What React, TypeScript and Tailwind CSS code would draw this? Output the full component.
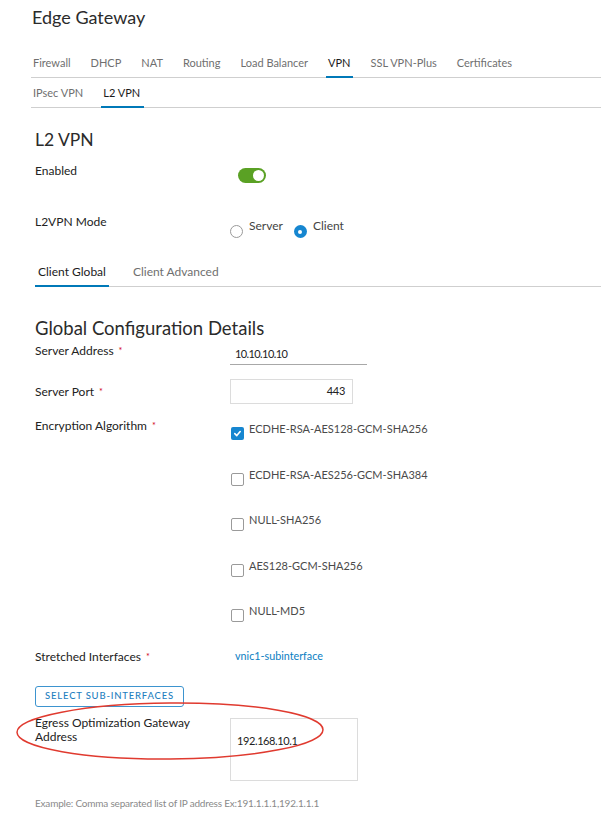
import React from "react";

const font = { fontFamily: "Lato, 'Open Sans', Arial, sans-serif" };

function Tab({
  label,
  active,
  px = "px-[2px]",
  size = "text-[11px]",
}: {
  label: string;
  active?: boolean;
  px?: string;
  size?: string;
}) {
  return (
    <div
      className={`${px} ${size} pb-[5px] -mb-px border-b-2 leading-[16px] ${
        active ? "border-[#0079b8] text-[#1b1b1b]" : "border-transparent text-[#6f6f6f]"
      }`}
    >
      {label}
    </div>
  );
}

function Star() {
  return <span className="ml-[5px] text-[#d0021b] text-[9px] align-top">*</span>;
}

function Checkbox({ checked }: { checked?: boolean }) {
  return checked ? (
    <div className="w-[13px] h-[13px] rounded-[2px] bg-[#1686d0] flex items-center justify-center shrink-0">
      <svg width="9" height="9" viewBox="0 0 10 10">
        <path d="M2 5.2 L4.2 7.3 L8 2.8" fill="none" stroke="white" strokeWidth="1.8" strokeLinecap="round" strokeLinejoin="round" />
      </svg>
    </div>
  ) : (
    <div className="w-[13px] h-[13px] rounded-[2px] border border-[#9a9a9a] bg-white shrink-0" />
  );
}

const labelCls = "w-[195px] text-[12px] leading-[14px] text-[#222]";

export default function App() {
  const options = [
    { label: "ECDHE-RSA-AES128-GCM-SHA256", checked: true },
    { label: "ECDHE-RSA-AES256-GCM-SHA384" },
    { label: "NULL-SHA256" },
    { label: "AES128-GCM-SHA256" },
    { label: "NULL-MD5" },
  ];
  return (
    <div className="relative w-[601px] h-[814px] bg-white overflow-hidden text-[#333]" style={font}>
      <div className="pl-[35px] pt-[5px]">
        <h1 className="text-[18px] leading-[24px] text-[#2b2b2b] -ml-[3px]">Edge Gateway</h1>

        <div className="mt-[26px] -ml-[4px] flex gap-[16px] border-b border-[#cfcfcf]">
          <Tab label="Firewall" />
          <Tab label="DHCP" />
          <Tab label="NAT" />
          <Tab label="Routing" />
          <Tab label="Load Balancer" />
          <Tab label="VPN" active />
          <Tab label="SSL VPN-Plus" />
          <Tab label="Certificates" />
        </div>

        <div className="mt-[7px] -ml-[4px] flex gap-[16px] border-b border-[#cfcfcf]">
          <Tab label="IPsec VPN" />
          <Tab label="L2 VPN" active px="pl-[2px] pr-[4px]" />
        </div>

        <h2 className="mt-[22px] text-[17.5px] leading-[20px] text-[#2b2b2b]">L2 VPN</h2>

        <div className="mt-[14px] h-[51px] flex">
          <div className={labelCls}>Enabled</div>
          <div className="ml-[8px] mt-[4px] w-[28px] h-[15px] rounded-full bg-[#5aa124] flex items-center justify-end pr-[2px]">
            <div className="w-[11px] h-[11px] rounded-full bg-white" />
          </div>
        </div>

        <div className="h-[49px] flex">
          <div className={labelCls}>L2VPN Mode</div>
          <div className="pt-[4px] flex text-[12px] leading-[14px] text-[#444]">
            <div className="flex items-start">
              <div className="mt-[6px] w-[13px] h-[13px] rounded-full border border-[#9a9a9a] bg-white" />
              <span className="ml-[6px]">Server</span>
            </div>
            <div className="flex items-start ml-[11px]">
              <div className="mt-[6px] w-[13px] h-[13px] rounded-full bg-[#1686d0] flex items-center justify-center">
                <div className="w-[4px] h-[4px] rounded-full bg-white" />
              </div>
              <span className="ml-[6px]">Client</span>
            </div>
          </div>
        </div>

        <div className="flex gap-[21px] border-b border-[#cfcfcf]">
          <Tab label="Client Global" active px="px-[3px]" size="text-[12px]" />
          <Tab label="Client Advanced" px="px-[3px]" size="text-[12px]" />
        </div>

        <h2 className="mt-[30px] text-[18.5px] leading-[22px] text-[#2b2b2b]">Global Configuration Details</h2>

        <div className="mt-[5px] h-[35px] flex">
          <div className={labelCls}>
            Server Address<Star />
          </div>
          <div className="mt-[3px] w-[137px] h-[18px] border-b border-[#a8a8a8] pl-[5px] text-[11px] tracking-[-0.6px] leading-[14px] text-[#222]">
            10.10.10.10
          </div>
        </div>

        <div className="h-[40px] flex">
          <div className={`${labelCls} pt-[6px]`}>
            Server Port<Star />
          </div>
          <div className="w-[123px] h-[25px] border border-[#dcdcdc] flex items-center justify-end pr-[7px] text-[11px] tracking-[-0.3px] text-[#222]">
            443
          </div>
        </div>

        <div className="flex">
          <div className={labelCls}>
            Encryption Algorithm<Star />
          </div>
          <div className="pt-[3px] flex flex-col">
            {options.map((o) => (
              <div key={o.label} className="h-[45.5px] flex items-start">
                <div className="mt-[5px] ml-[1px]">
                  <Checkbox checked={o.checked} />
                </div>
                <span className="ml-[5px] text-[11px] leading-[14px] text-[#4a4a4a]">{o.label}</span>
              </div>
            ))}
          </div>
        </div>

        <div className="h-[36px] flex">
          <div className={labelCls}>
            Stretched Interfaces<Star />
          </div>
          <div className="-mt-[1px] pl-[5px] text-[10.75px] leading-[14px] text-[#0a7ec2]">vnic1-subinterface</div>
        </div>

        <button className="w-[149px] h-[21px] border border-[#3d94cf] rounded-[3px] text-[9.5px] tracking-[0.8px] text-[#1f7fc0] font-medium flex items-center justify-center">
          SELECT SUB-INTERFACES
        </button>

        <div className="mt-[9px] flex">
          <div className={labelCls}>
            Egress Optimization Gateway
            <br />
            Address
          </div>
          <div className="mt-[2px] w-[128px] h-[63px] border border-[#dcdcdc] pt-[15px] pl-[6px] text-[11px] tracking-[-0.4px] leading-[14px] text-[#222]">
            192.168.10.1
          </div>
        </div>

        <div className="mt-[15px] text-[10px] tracking-[-0.2px] leading-[14px] text-[#8a8a8a]">
          Example: Comma separated list of IP address Ex:191.1.1.1,192.1.1.1
        </div>
      </div>

      <svg className="absolute left-0 top-0 pointer-events-none" width="601" height="814">
        <ellipse cx="170" cy="731" rx="153" ry="28" fill="none" stroke="#e03a2f" strokeWidth="1.5" transform="rotate(-0.5 170 731)" />
      </svg>
    </div>
  );
}
